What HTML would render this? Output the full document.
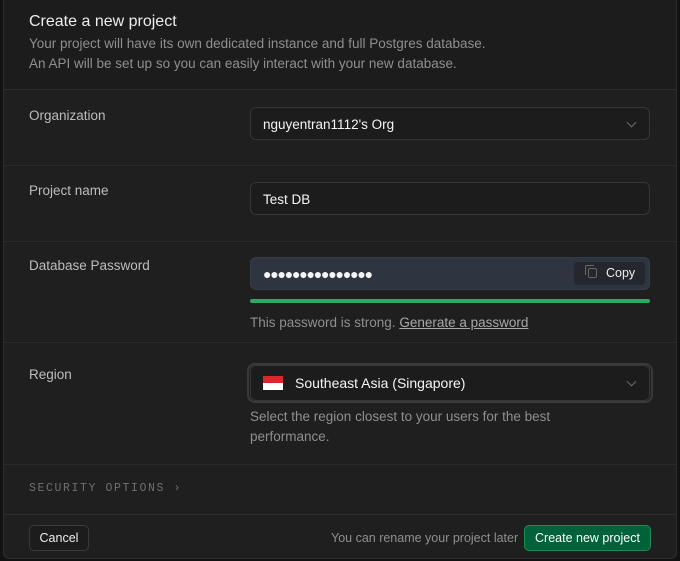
<!DOCTYPE html>
<html><head><style>
*{box-sizing:border-box;margin:0;padding:0}
body{width:680px;height:561px;background:#121212;font-family:"Liberation Sans",sans-serif;overflow:hidden;position:relative}
.card{position:absolute;left:3px;top:-8px;width:674px;height:567px;background:#1f1f1f;border:1px solid #2e2e2e;border-radius:6px;overflow:hidden}
.hdr{position:absolute;left:0;top:0;right:0;height:97px;background:#1c1c1c;border-bottom:1px solid #2e2e2e}
.abs{position:absolute}
.t{color:#ededed;font-size:16px;left:25px;top:19px}
.s{color:#8f8f8f;font-size:13.5px;left:25px;line-height:20px}
.lbl{color:#bdbdbd;font-size:13.5px;left:25px}
.hr{position:absolute;left:0;right:0;height:1px;background:#2a2a2a}
.inp{position:absolute;left:246px;width:400px;height:33px;border:1px solid #363636;border-radius:6px;background:#1c1c1c;color:#f5f5f5;font-size:13.5px;padding:9px 12px}
.chev{position:absolute;right:14px;top:11px;width:7px;height:7px;border-right:1px solid #6a6a6a;border-bottom:1px solid #6a6a6a;transform:rotate(45deg)}
.help{color:#8f8f8f;font-size:13.5px;left:246px;line-height:20px}
</style></head><body>
<div class="card">
<div class="hdr"></div>
<div class="abs t" style="top:20px">Create a new project</div>
<div class="abs s" style="top:41px">Your project will have its own dedicated instance and full Postgres database.<br>An API will be set up so you can easily interact with your new database.</div>
<div class="abs lbl" style="top:115px">Organization</div>
<div class="inp" style="top:114px">nguyentran1112's Org<div class="chev"></div></div>
<div class="hr" style="top:172px"></div>
<div class="abs lbl" style="top:190px">Project name</div>
<div class="inp" style="top:189px">Test DB</div>
<div class="hr" style="top:248px"></div>
<div class="abs lbl" style="top:265px">Database Password</div>
<div class="inp" style="top:264px;background:#2e3440;border-color:#363c48;font-size:14px;letter-spacing:-1.2px;padding-top:8px">●●●●●●●●●●●●●●●
 <div class="abs" style="right:4px;top:4px;width:71px;height:23px;background:#23272e;border-radius:4px;color:#ededed;font-size:12.5px;letter-spacing:0;padding:4px 0 0 32px">Copy
  <div class="abs" style="left:14px;top:6px;width:9px;height:10px;border:1px solid #666;border-radius:2px"></div>
  <div class="abs" style="left:11px;top:3px;width:9px;height:10px;border-left:1px solid #666;border-top:1px solid #666;border-radius:2px 0 0 0"></div>
 </div>
</div>
<div class="abs" style="left:246px;top:306px;width:400px;height:4px;border-radius:2px;background:#2fa864"></div>
<div class="abs help" style="top:320px">This password is strong. <span style="color:#a8a8a8;text-decoration:underline">Generate a password</span></div>
<div class="hr" style="top:349px"></div>
<div class="abs lbl" style="top:374px">Region</div>
<div class="abs" style="left:243px;top:370px;width:406px;height:40px;border:2px solid #3a3a3a;border-radius:8px"></div>
<div class="inp" style="top:372px;height:36px;font-size:14px;padding:9px 12px 0 44px">Southeast Asia (Singapore)
 <div class="abs" style="left:12px;top:10px;width:20px;height:14px;background:#fff"><div style="height:7px;background:#e0242d"></div></div>
 <div class="chev" style="top:12px"></div></div>
<div class="abs help" style="top:414px">Select the region closest to your users for the best<br>performance.</div>
<div class="hr" style="top:471px"></div>
<div class="abs" style="left:25px;top:489px;font-family:'Liberation Mono',monospace;font-size:11.5px;letter-spacing:1.6px;color:#6f6f6f">SECURITY OPTIONS ›</div>
<div class="hr" style="top:521px;background:#2e2e2e"></div>
<div class="abs" style="left:25px;top:532px;width:60px;height:26px;border:1px solid #3a3a3a;border-radius:5px;background:#1c1c1c;color:#ededed;font-size:12.5px;text-align:center;line-height:24px">Cancel</div>
<div class="abs" style="left:327px;top:538px;color:#8f8f8f;font-size:12.5px">You can rename your project later</div>
<div class="abs" style="left:520px;top:532px;width:127px;height:26px;border:1px solid #1f8a52;border-radius:5px;background:#006239;color:#fff;font-size:12.5px;text-align:center;line-height:24px">Create new project</div>
</div>
</body></html>
